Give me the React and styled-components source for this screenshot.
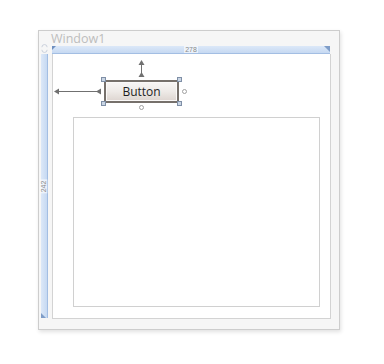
import React from 'react'
import styled, { createGlobalStyle } from 'styled-components'

const Global = createGlobalStyle`
  body { margin: 0; background: #fff; font-family: "Liberation Sans", Arial, sans-serif; }
`;

const Stage = styled.div`
  width: 384px;
  height: 364px;
  padding: 30px 0 0 38px;
  box-sizing: border-box;
`;

const Window = styled.div`
  width: 302px;
  height: 300px;
  box-sizing: border-box;
  border: 1px solid #cdcdcd;
  background: #f6f6f6;
  box-shadow: 1px 2px 4px rgba(0,0,0,0.12);
  padding: 0 8px 10px 2px;
  display: grid;
  grid-template-columns: 7px 279px;
  grid-template-rows: 15px 8px 265px;
  column-gap: 4px;
`;

const Corner = styled.div`
  grid-column: 1;
  grid-row: 1 / 3;
  display: flex;
  align-items: flex-end;
  justify-content: center;
  padding-bottom: 1px;
`;

const Title = styled.div`
  grid-column: 2;
  grid-row: 1;
  font-family: "Open Sans", "Liberation Sans", sans-serif;
  font-size: 12.5px;
  line-height: 15px;
  color: #bdbdbd;
  margin-left: -1px;
`;

const HRuler = styled.div`
  grid-column: 2;
  grid-row: 2;
  position: relative;
  background: linear-gradient(#dce8f8, #c6d9f2);
  border-bottom: 1px solid #a3bee3;
  display: flex;
  justify-content: center;
  align-items: center;
  margin-right: 1px;
`;

const VRuler = styled.div`
  grid-column: 1;
  grid-row: 3;
  position: relative;
  background: linear-gradient(90deg, #dce8f8, #c6d9f2);
  border-right: 1px solid #a3bee3;
  display: flex;
  justify-content: center;
  align-items: center;
  margin-bottom: 1px;
`;

const Size = styled.span`
  font-size: 7px;
  line-height: 7px;
  color: #8a8a8a;
  background: rgba(255,255,255,0.6);
  padding: 0 1px;
  transform: ${p => (p.$vertical ? 'rotate(-90deg)' : 'none')};
`;

const Tip = styled.div`
  position: absolute;
  width: 0;
  height: 0;
  ${p => p.$pos === 'left' && `left: 0; top: 0; border-top: 4px solid #6e8fbf; border-right: 4px solid transparent;`}
  ${p => p.$pos === 'right' && `right: 0; top: 0; border-top: 6px solid #7f9dc8; border-left: 6px solid transparent;`}
  ${p => p.$pos === 'bottom' && `left: 0; bottom: 0; border-bottom: 5px solid #7f9dc8; border-right: 5px solid transparent;`}
`;

const Client = styled.div`
  grid-column: 2;
  grid-row: 3;
  background: #fff;
  border: 1px solid #d3d3d3;
  border-top: none;
  box-sizing: border-box;
  display: flex;
  flex-direction: column;
  align-items: flex-start;
  padding: 26px 0 0 51px;
`;

const Selection = styled.div`
  position: relative;
`;

const Button = styled.button`
  width: 75px;
  height: 23px;
  box-sizing: border-box;
  border: 2px solid #76706b;
  border-radius: 2px;
  background: linear-gradient(#f8f6f5 0%, #eeeae7 50%, #ddd5d0 100%);
  box-shadow: inset 0 0 0 1px #fbf9f8;
  font-family: "Open Sans", "Liberation Sans", sans-serif;
  font-size: 12px;
  color: #1e1e1e;
  padding: 0;
`;

const Handle = styled.span`
  position: absolute;
  width: 5px;
  height: 5px;
  box-sizing: border-box;
  border: 1px solid #7f8fa6;
  background: #c9d5e4;
  ${p => (p.$top ? 'top: -3px;' : 'bottom: -3px;')}
  ${p => (p.$left ? 'left: -3px;' : 'right: -3px;')}
`;

const Dot = styled.span`
  position: absolute;
  width: 5px;
  height: 5px;
  box-sizing: border-box;
  border: 1px solid #a0a0a0;
  border-radius: 50%;
  background: #fff;
  ${p => (p.$side === 'right' ? 'right: -8px; top: 9px;' : 'left: 35px; bottom: -7px;')}
`;

const Arrow = styled.svg`
  position: absolute;
  overflow: visible;
  ${p => (p.$dir === 'up' ? 'left: 34px; top: -20px;' : 'left: -50px; top: 8px;')}
`;

const Panel = styled.div`
  margin: 14px 0 0 -31px;
  width: 247px;
  height: 190px;
  box-sizing: border-box;
  border: 1px solid #d0d0d0;
  background: #fff;
`;

const App = () => {
  return (
    <Stage>
      <Global />
      <Window>
        <Corner>
          <svg width="8" height="9" viewBox="0 0 8 9">
            <path d="M1 3 A3 3 0 0 1 7 3" fill="none" stroke="#c3ccd8" strokeWidth="1" />
            <path d="M1 6 A3 3 0 0 0 7 6" fill="none" stroke="#c3ccd8" strokeWidth="1" />
          </svg>
        </Corner>
        <Title>Window1</Title>
        <HRuler>
          <Tip $pos="left" />
          <Size>278</Size>
          <Tip $pos="right" />
        </HRuler>
        <VRuler>
          <Size $vertical>242</Size>
          <Tip $pos="bottom" />
        </VRuler>
        <Client>
          <Selection>
            <Button>Button</Button>
            <Handle $top $left />
            <Handle $top />
            <Handle $left />
            <Handle />
            <Dot $side="right" />
            <Dot $side="bottom" />
            <Arrow $dir="up" width="7" height="18">
              <line x1="3.5" y1="2" x2="3.5" y2="17" stroke="#707070" strokeWidth="1" />
              <path d="M0.5 5 L3.5 0 L6.5 5 Z" fill="#707070" />
              <path d="M0.5 17 L3.5 12 L6.5 17 Z" fill="#707070" />
            </Arrow>
            <Arrow $dir="left" width="48" height="7">
              <line x1="1" y1="3.5" x2="46" y2="3.5" stroke="#707070" strokeWidth="1" />
              <path d="M0 3.5 L5 0.5 L5 6.5 Z" fill="#707070" />
              <path d="M42 3.5 L47 0.5 L47 6.5 Z" fill="#707070" />
            </Arrow>
          </Selection>
          <Panel />
        </Client>
      </Window>
    </Stage>
  )
}

export default App
